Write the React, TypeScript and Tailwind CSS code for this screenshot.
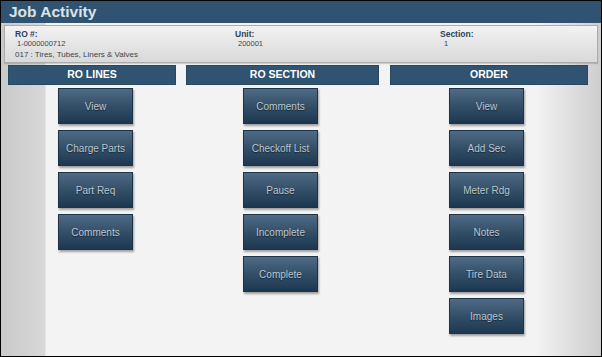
import React from "react";

const roLines = ["View", "Charge Parts", "Part Req", "Comments"];
const roSection = ["Comments", "Checkoff List", "Pause", "Incomplete", "Complete"];
const order = ["View", "Add Sec", "Meter Rdg", "Notes", "Tire Data", "Images"];

function ActionButton({ label }: { label: string }) {
  return (
    <button className="w-[75px] h-[36px] flex items-center justify-center border border-[#1d3347] bg-[linear-gradient(to_bottom,#4e6a84,#314d66_55%,#1d3750)] text-[10px] text-[#bcc6d0] [text-shadow:0_1px_1px_rgba(0,0,0,0.5)] shadow-[1px_2px_2px_rgba(0,0,0,0.35)]">
      {label}
    </button>
  );
}

function Column({
  title,
  items,
  className,
  buttonOffset,
}: {
  title: string;
  items: string[];
  className: string;
  buttonOffset: string;
}) {
  return (
    <div className={className}>
      <div className="h-[20px] bg-[#2f5371] border border-[#284760] flex items-center justify-center text-[10.5px] font-bold text-white">
        {title}
      </div>
      <div className={`mt-[3px] flex flex-col gap-[6px] ${buttonOffset}`}>
        {items.map((item) => (
          <ActionButton key={item + title} label={item} />
        ))}
      </div>
    </div>
  );
}

export default function App() {
  return (
    <div
      className="w-[602px] h-[357px] border border-black flex flex-col overflow-hidden"
      style={{ fontFamily: '"Liberation Sans", Arial, sans-serif' }}
    >
      <div className="h-[22px] shrink-0 bg-[#2f5371] flex items-center px-[8px]">
        <span className="text-[15.5px] font-bold text-[#dde2e7] leading-none">Job Activity</span>
      </div>

      <div className="flex-1 px-[3px] pt-[2px] bg-[linear-gradient(to_right,#c9c9c9,#d8d8d8_44px,#f3f3f3_45px,#f3f3f3_535px,#cdcdcd)]">
        {/* info box */}
        <div className="h-[38px] border border-[#acacac] bg-[linear-gradient(to_bottom,#f2f2f2,#d9d9d9)] flex pl-[10px] pt-[3px] shadow-[0_1px_1px_rgba(0,0,0,0.15)]">
          <div className="w-[220px]">
            <div className="h-[10px] leading-[10px] text-[8.5px] font-bold text-[#2a4560]">RO #:</div>
            <div className="h-[9px] leading-[9px] pl-[2px] text-[7.5px] text-[#3a4450]">1-0000000712</div>
            <div className="mt-[1px] h-[11px] leading-[11px] text-[8px] text-[#3a4450] whitespace-nowrap">017 : Tires, Tubes, Liners &amp; Valves</div>
          </div>
          <div className="w-[205px]">
            <div className="h-[10px] leading-[10px] text-[8.5px] font-bold text-[#2a4560]">Unit:</div>
            <div className="h-[9px] leading-[9px] pl-[3px] text-[7.5px] text-[#3a4450]">200001</div>
          </div>
          <div>
            <div className="h-[10px] leading-[10px] text-[8.5px] font-bold text-[#2a4560]">Section:</div>
            <div className="h-[9px] leading-[9px] pl-[4px] text-[7.5px] text-[#3a4450]">1</div>
          </div>
        </div>

        {/* columns */}
        <div className="mt-[2px] flex">
          <Column title="RO LINES" items={roLines} className="ml-[4px] w-[168px]" buttonOffset="pl-[50px]" />
          <Column title="RO SECTION" items={roSection} className="ml-[10px] w-[193px]" buttonOffset="pl-[57px]" />
          <Column title="ORDER" items={order} className="ml-[11px] w-[198px]" buttonOffset="pl-[59px]" />
        </div>
      </div>
    </div>
  );
}
